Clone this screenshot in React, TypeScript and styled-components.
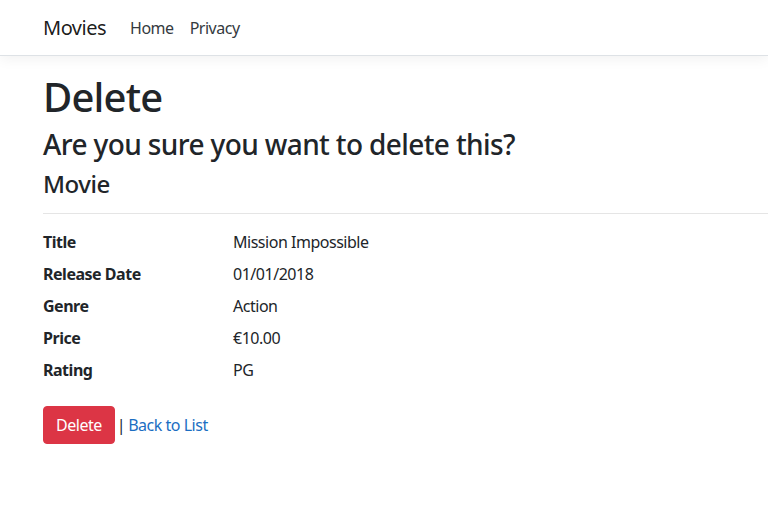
import React from "react";
import styled, { createGlobalStyle } from "styled-components";

const GlobalStyle = createGlobalStyle`
  *, *::before, *::after { box-sizing: border-box; }
  html, body { margin: 0; padding: 0; }
  body {
    font-family: "Segoe UI", "Noto Sans", sans-serif;
    font-size: 16px;
    line-height: 1.5;
    letter-spacing: -0.03em;
    color: #212529;
    background: #fff;
    overflow: hidden;
  }
`;

const Navbar = styled.header`
  display: flex;
  align-items: center;
  height: 56px;
  padding: 0 0 0 43px;
  border-bottom: 1px solid #dee2e6;
  box-shadow: 0 0.25rem 0.75rem rgba(0, 0, 0, 0.05);
  margin-bottom: 16px;
`;

const Brand = styled.a`
  font-size: 20px;
  line-height: 30px;
  letter-spacing: -0.025em;
  color: rgba(0, 0, 0, 0.9);
  text-decoration: none;
  margin-right: 16px;
`;

const NavList = styled.nav`
  display: flex;
`;

const NavLink = styled.a`
  color: #343a40;
  text-decoration: none;
  padding: 8px 8px;
  font-size: 16px;
`;

const Main = styled.main`
  padding: 0 0 16px 43px;
`;

const H1 = styled.h1`
  font-size: 40px;
  line-height: 1.2;
  font-weight: 500;
  letter-spacing: -0.02em;
  margin: 0 0 8px;
  position: relative;
  top: 1px;
`;

const H3 = styled.h3`
  font-size: 28px;
  line-height: 1.2;
  font-weight: 500;
  letter-spacing: -0.022em;
  margin: 0 0 8px;
`;

const H4 = styled.h4`
  font-size: 24px;
  line-height: 1.2;
  font-weight: 500;
  letter-spacing: -0.02em;
  margin: 0;
`;

const Rule = styled.hr`
  border: 0;
  border-top: 1px solid rgba(0, 0, 0, 0.1);
  margin: 15px 0 16px;
`;

const DetailList = styled.dl`
  display: grid;
  grid-template-columns: 190px 1fr;
  margin: 0 0 16px;
`;

const Term = styled.dt`
  font-weight: 700;
  margin: 0 0 8px;
`;

const Def = styled.dd`
  margin: 0 0 8px;
`;

const Form = styled.form`
  display: flex;
  align-items: center;
`;

const DangerButton = styled.button`
  font-family: inherit;
  font-size: 16px;
  line-height: 1.5;
  letter-spacing: inherit;
  color: #fff;
  background: #dc3545;
  border: 1px solid #dc3545;
  border-radius: 4px;
  padding: 6px 12px;
  height: 38px;
  cursor: pointer;
`;

const Sep = styled.span`
  margin: 0 3px 0 2px;
`;

const Link = styled.a`
  color: #1b6ec2;
  text-decoration: none;
`;

const rows: [string, string][] = [
  ["Title", "Mission Impossible"],
  ["Release Date", "01/01/2018"],
  ["Genre", "Action"],
  ["Price", "€10.00"],
  ["Rating", "PG"],
];

export default function App() {
  return (
    <>
      <GlobalStyle />
      <Navbar>
        <Brand href="#">Movies</Brand>
        <NavList>
          <NavLink href="#">Home</NavLink>
          <NavLink href="#">Privacy</NavLink>
        </NavList>
      </Navbar>
      <Main>
        <H1>Delete</H1>
        <H3>Are you sure you want to delete this?</H3>
        <div>
          <H4>Movie</H4>
          <Rule />
          <DetailList>
            {rows.map(([k, v]) => (
              <React.Fragment key={k}>
                <Term>{k}</Term>
                <Def>{v}</Def>
              </React.Fragment>
            ))}
          </DetailList>
          <Form onSubmit={(e) => e.preventDefault()}>
            <DangerButton type="submit">Delete</DangerButton>
            <Sep>|</Sep>
            <Link href="#">Back to List</Link>
          </Form>
        </div>
      </Main>
    </>
  );
}
